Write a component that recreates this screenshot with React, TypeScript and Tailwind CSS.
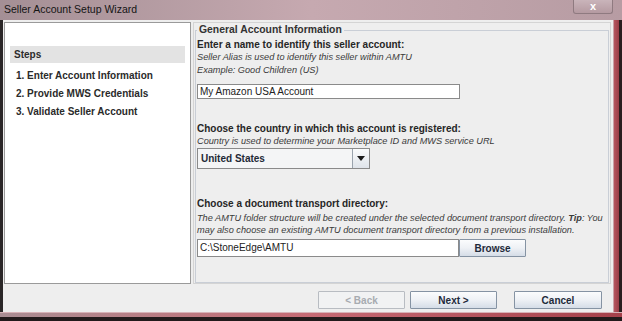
import React from "react";

const font = { fontFamily: '"Liberation Sans", Arial, sans-serif' };

function WizButton(props: { label: string; disabled?: boolean; width: string }) {
  return (
    <div
      className={`${props.width} h-[18px] flex items-center justify-center border text-[10px] font-bold rounded-[1px] ${
        props.disabled
          ? "border-[#b8bcc2] bg-[#f1f2f3] text-[#a7abb0]"
          : "border-[#8593a3] bg-gradient-to-b from-[#fbfcfd] via-[#eef1f5] to-[#d5dde7] text-[#1d2a3a]"
      }`}
    >
      {props.label}
    </div>
  );
}

export default function App() {
  return (
    <div className="w-[622px] h-[321px] flex flex-col bg-[#1e1a1b] overflow-hidden" style={font}>
      {/* title bar */}
      <div className="h-[20px] flex justify-between bg-gradient-to-r from-[#a48f95] via-[#c6a9b0] to-[#b79ca3]">
        <span className="pl-[4px] pt-[2px] text-[10.5px] leading-[14px] text-[#141414]">
          Seller Account Setup Wizard
        </span>
        <div className="mr-[9px] w-[40px] h-[14px] flex items-center justify-center border border-t-0 border-[#8f7a80] rounded-b-[3px] bg-gradient-to-b from-[#c9b4ba] to-[#b59aa1] text-[11px] font-bold leading-none text-white">
          x
        </div>
      </div>

      <div className="flex-1 flex">
        <div className="w-[3px] bg-[#2a2627]" />
        <div className="w-[610px] bg-[#eeeeee] flex flex-col">
          <div className="flex gap-[2px] pt-[2px] pl-[1px] pr-[2px]">
            {/* steps panel */}
            <div className="w-[187px] h-[262px] bg-white border border-[#9a9a9a] pt-[23px] px-[5px]">
              <div className="h-[17px] bg-[#e3e3e3] pl-[4px] text-[10px] font-bold leading-[17px] text-[#2c2c2c]">
                Steps
              </div>
              <div className="pl-[6px] pt-[4px] text-[10px] font-bold text-[#2a2a2a] leading-[18px]">
                <div>1. Enter Account Information</div>
                <div>2. Provide MWS Credentials</div>
                <div>3. Validate Seller Account</div>
              </div>
            </div>

            {/* content panel */}
            <div className="flex-1 h-[262px] border border-[#d4d4d4] px-[1px] flex flex-col">
              <div className="h-[14px] flex items-center">
                <div className="w-[2px] self-stretch flex flex-col">
                  <div className="h-[7px]" />
                  <div className="flex-1 border-t border-l border-[#c9ced6]" />
                </div>
                <span className="px-[2px] text-[10.4px] font-bold leading-[14px] text-[#333]">
                  General Account Information
                </span>
                <div className="flex-1 self-stretch flex flex-col">
                  <div className="h-[7px]" />
                  <div className="flex-1 border-t border-r border-[#c9ced6]" />
                </div>
              </div>
              <div className="flex-1 border-l border-r border-b border-[#c9ced6] px-[1px]">
                <div className="mt-[1px] h-[13px] text-[10px] font-bold leading-[13px] text-[#262626]">
                  Enter a name to identify this seller account:
                </div>
                <div className="text-[9.2px] italic leading-[13px] text-[#3a3a3a]">
                  <div>Seller Alias is used to identify this seller within AMTU</div>
                  <div>Example: Good Children (US)</div>
                </div>
                <div className="mt-[7px] w-[263px] h-[15px] border border-[#8a8a8a] bg-white pl-[2px] text-[10px] leading-[13px] text-[#222]">
                  My Amazon USA Account
                </div>

                <div className="mt-[23px] h-[13px] text-[10px] font-bold leading-[13px] text-[#262626]">
                  Choose the country in which this account is registered:
                </div>
                <div className="text-[9.2px] italic leading-[12px] text-[#3a3a3a] whitespace-nowrap">
                  Country is used to determine your Marketplace ID and MWS service URL
                </div>
                <div className="mt-[1px] w-[173px] h-[21px] flex border border-[#8a8a8a] bg-[#f4f5f6]">
                  <div className="flex-1 pl-[3px] text-[10px] font-bold leading-[19px] text-[#1f2a36]">
                    United States
                  </div>
                  <div className="w-[17px] flex items-center justify-center border-l border-[#9aa3ad] bg-gradient-to-b from-[#fafbfc] to-[#dfe4ea]">
                    <svg width="8" height="5" viewBox="0 0 8 5">
                      <path d="M0 0 H8 L4 5 Z" fill="#1b1b1b" />
                    </svg>
                  </div>
                </div>

                <div className="mt-[28px] h-[13px] text-[10px] font-bold leading-[13px] text-[#262626]">
                  Choose a document transport directory:
                </div>
                <div className="mt-[2px] text-[9.2px] italic leading-[12px] text-[#3a3a3a] whitespace-nowrap">
                  <div>
                    The AMTU folder structure will be created under the selected document transport directory.{" "}
                    <span className="font-bold">Tip</span>: You
                  </div>
                  <div>may also choose an existing AMTU document transport directory from a previous installation.</div>
                </div>
                <div className="mt-[3px] flex">
                  <div className="w-[262px] h-[18px] border border-[#8a8a8a] bg-white pl-[2px] text-[10px] leading-[16px] text-[#222]">
                    C:\StoneEdge\AMTU
                  </div>
                  <WizButton label="Browse" width="w-[67px]" />
                </div>
              </div>
            </div>
          </div>

          {/* buttons */}
          <div className="flex pt-[7px] pl-[315px]">
            <WizButton label="< Back" disabled width="w-[87px]" />
            <div className="ml-[5px]">
              <WizButton label="Next >" width="w-[87px]" />
            </div>
            <div className="ml-[17px]">
              <WizButton label="Cancel" width="w-[88px]" />
            </div>
          </div>
        </div>
        <div className="w-[9px] flex">
          <div className="w-[1px] bg-[#c9a0a6]" />
          <div className="w-[5px] bg-gradient-to-r from-[#b5565f] to-[#9a3d47]" />
          <div className="w-[3px] bg-[#2a1c1e]" />
        </div>
      </div>
      <div className="h-[9px] flex flex-col">
        <div className="h-[1px] bg-[#d7b3b8]" />
        <div className="h-[4px] bg-gradient-to-r from-[#a98d93] via-[#c66a74] to-[#a5414b]" />
        <div className="h-[4px] bg-[#221a1b]" />
      </div>
    </div>
  );
}
